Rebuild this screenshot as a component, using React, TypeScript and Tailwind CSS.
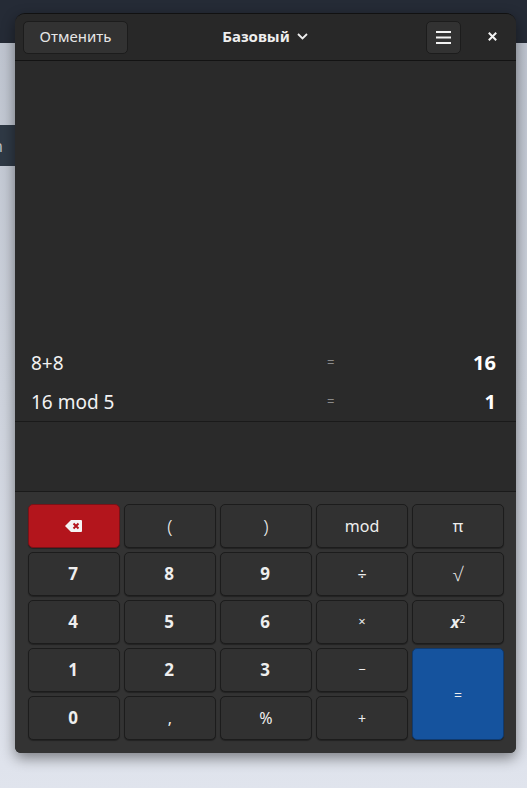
const FONT = "font-['Noto_Sans','Open_Sans',sans-serif]";

const keyBase =
  "flex items-center justify-center rounded-[5px] border border-[#1c1c1c] bg-[#313131] text-[#eeeeee] shadow-[0_1px_1px_rgba(0,0,0,0.35)]";

function Key({ label, bold, size = "text-base" }: { label: React.ReactNode; bold?: boolean; size?: string }) {
  return <button className={`${keyBase} ${size} ${bold ? "font-bold pr-0.5" : "font-normal"}`}>{label}</button>;
}

function BackspaceIcon() {
  return (
    <svg width="17" height="12" viewBox="0 0 17 12" className="-ml-0.5">
      <path d="M6 0h10a1 1 0 0 1 1 1v10a1 1 0 0 1-1 1H6L0 6z" fill="#f4f4f4" />
      <path d="M8.5 3.5l5 5M13.5 3.5l-5 5" stroke="#b3151c" strokeWidth="2" />
    </svg>
  );
}

function HistoryRow({ expr, result }: { expr: string; result: string }) {
  return (
    <div className="grid h-[39px] grid-cols-[296px_1fr_auto] items-center pr-5 pl-4">
      <span className="pt-0.5 text-[19px] text-[#f2f2f2]">{expr}</span>
      <span className="text-[13px] text-[#8a8a8a]">=</span>
      <span className="text-[20px] font-bold text-white">{result}</span>
    </div>
  );
}

export default function App() {
  return (
    <div className={`${FONT} relative h-[788px] w-[527px] overflow-hidden bg-gradient-to-b from-[#bdc3ce] to-[#e0e4ed]`}>
      {/* desktop behind the window */}
      <div className="absolute top-0 left-0 h-[43px] w-full bg-[#252b36]" />
      <div className="absolute top-[125px] left-0 flex h-[41px] w-[16px] items-center bg-[#2f3945] text-[16px] text-[#b9bec5]">
        <span className="-ml-[7px]">n</span>
      </div>

      <div className="relative mt-[13px] ml-[15px] flex h-[740px] w-[501px] flex-col overflow-hidden rounded-t-[10px] rounded-b-[6px] border-t border-[#111111] bg-[#2a2a2a] shadow-[0_5px_14px_rgba(0,0,0,0.45)]">
        {/* header */}
        <div className="flex h-[47px] shrink-0 items-center border-b border-[#131313] bg-[#282828] pl-2">
          <button className="h-[33px] w-[105px] rounded-[5px] border border-[#1c1c1c] bg-[#323232] pb-0.5 text-[15px] text-[#e6e6e6]">
            Отменить
          </button>
          <div className="flex flex-1 items-center justify-center gap-[7px] pr-[24px] pb-0.5 text-[15px] font-bold text-[#eeeeee]">
            Базовый
            <svg width="11" height="7" viewBox="0 0 11 7" fill="none" stroke="#eeeeee" strokeWidth="1.8">
              <path d="M1 1l4.5 4.5L10 1" />
            </svg>
          </div>
          <button className="flex h-[33px] w-[35px] items-center justify-center rounded-[5px] border border-[#1c1c1c] bg-[#323232]">
            <svg width="15" height="13" viewBox="0 0 15 13" fill="#f2f2f2">
              <rect y="0" width="15" height="2" />
              <rect y="5.5" width="15" height="2" />
              <rect y="11" width="15" height="2" />
            </svg>
          </button>
          <div className="flex w-[55px] justify-end pr-[19px] pb-0.5">
            <svg width="9" height="9" viewBox="0 0 9 9" stroke="#f2f2f2" strokeWidth="2">
              <path d="M0.8 0.8l7.4 7.4M8.2 0.8l-7.4 7.4" />
            </svg>
          </div>
        </div>

        {/* history */}
        <div className="flex flex-1 flex-col justify-end border-b border-[#1a1a1a]">
          <HistoryRow expr="8+8" result="16" />
          <HistoryRow expr="16 mod 5" result="1" />
        </div>

        {/* entry */}
        <div className="h-[70px] shrink-0 border-b border-[#1a1a1a] bg-[#2a2a2a]" />

        {/* keypad */}
        <div className="grid shrink-0 grid-cols-[repeat(5,92px)] grid-rows-[repeat(5,44px)] gap-1 bg-[#333333] pt-3 pr-3 pb-[13px] pl-[13px]">
          <button className={`${keyBase} !border-[#7a1217] !bg-[#b3151c]`}>
            <BackspaceIcon />
          </button>
          <Key label="(" size="text-[19px] !font-light" />
          <Key label=")" size="text-[19px] !font-light" />
          <Key label="mod" />
          <Key label="π" />

          <Key label="7" bold size="text-[17px]" />
          <Key label="8" bold size="text-[17px]" />
          <Key label="9" bold size="text-[17px]" />
          <Key label="÷" />
          <Key label="√" size="text-[19px] !font-light" />

          <Key label="4" bold size="text-[17px]" />
          <Key label="5" bold size="text-[17px]" />
          <Key label="6" bold size="text-[17px]" />
          <Key label="×" size="text-[13px]" />
          <Key
            label={
              <span className="italic">
                <b>x</b>
                <sup className="text-[10px] not-italic">2</sup>
              </span>
            }
          />

          <Key label="1" bold size="text-[17px]" />
          <Key label="2" bold size="text-[17px]" />
          <Key label="3" bold size="text-[17px]" />
          <Key label="−" size="text-[13px]" />
          <button className={`${keyBase} row-span-2 !border-[#103a6e] !bg-[#15539e] text-[14px]`}>=</button>

          <Key label="0" bold size="text-[17px]" />
          <Key label="," />
          <Key label="%" />
          <Key label="+" size="text-[14px]" />
        </div>
      </div>
    </div>
  );
}
